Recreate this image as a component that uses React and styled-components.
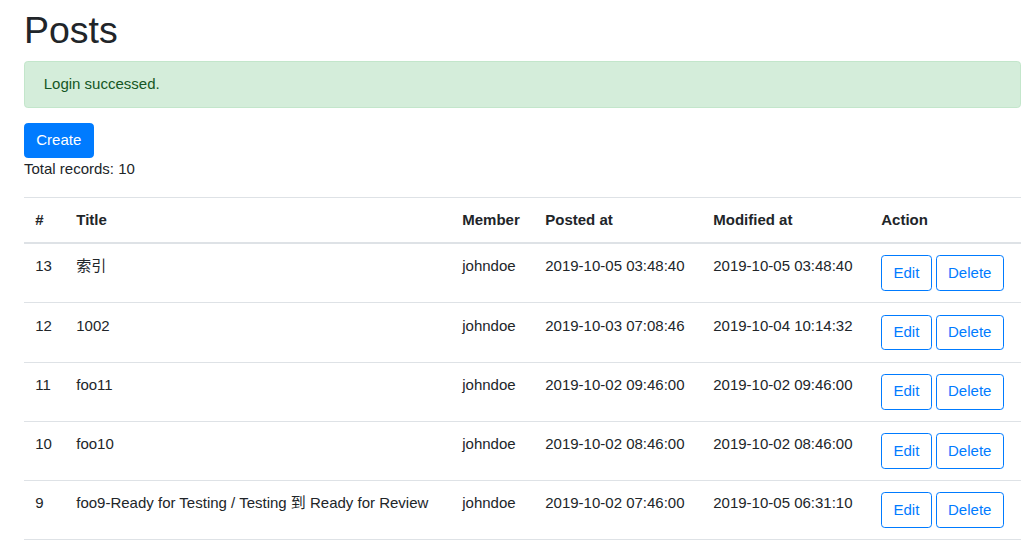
import styled, { createGlobalStyle } from "styled-components";

const GlobalStyle = createGlobalStyle`
  html, body {
    margin: 0;
    padding: 0;
    background: #fff;
  }
  body {
    font-family: "Liberation Sans", Arial, "Noto Sans CJK SC", sans-serif;
    font-size: 15px;
    line-height: 1.5;
    color: #212529;
  }
  *, *::before, *::after {
    box-sizing: border-box;
  }
`;

const posts = [
  { id: 13, title: "索引", member: "johndoe", posted: "2019-10-05 03:48:40", modified: "2019-10-05 03:48:40" },
  { id: 12, title: "1002", member: "johndoe", posted: "2019-10-03 07:08:46", modified: "2019-10-04 10:14:32" },
  { id: 11, title: "foo11", member: "johndoe", posted: "2019-10-02 09:46:00", modified: "2019-10-02 09:46:00" },
  { id: 10, title: "foo10", member: "johndoe", posted: "2019-10-02 08:46:00", modified: "2019-10-02 08:46:00" },
  { id: 9, title: "foo9-Ready for Testing / Testing 到 Ready for Review", member: "johndoe", posted: "2019-10-02 07:46:00", modified: "2019-10-05 06:31:10" },
];

const columns = [
  { label: "#", width: 41 },
  { label: "Title", width: 386 },
  { label: "Member", width: 83 },
  { label: "Posted at", width: 168 },
  { label: "Modified at", width: 168 },
  { label: "Action", width: 151 },
];

export default function App() {
  return (
    <>
      <GlobalStyle />
      <Page>
        <Heading>Posts</Heading>
        <Alert>Login successed.</Alert>
        <PrimaryButton>Create</PrimaryButton>
        <Total>Total records: 10</Total>
        <Table>
          <colgroup>
            {columns.map((c) => (
              <col key={c.label} style={{ width: c.width }} />
            ))}
          </colgroup>
          <thead>
            <tr>
              {columns.map((c) => (
                <Th key={c.label}>{c.label}</Th>
              ))}
            </tr>
          </thead>
          <tbody>
            {posts.map((p) => (
              <tr key={p.id}>
                <Td>{p.id}</Td>
                <Td>{p.title}</Td>
                <Td>{p.member}</Td>
                <Td>{p.posted}</Td>
                <Td>{p.modified}</Td>
                <Td>
                  <OutlineButton>Edit</OutlineButton>{" "}
                  <OutlineButton>Delete</OutlineButton>
                </Td>
              </tr>
            ))}
          </tbody>
        </Table>
      </Page>
    </>
  );
}

const Page = styled.div`
  padding: 8px 3px 0 24px;
`;

const Heading = styled.h1`
  margin: 0 0 7.5px;
  font-size: 37.5px;
  font-weight: 500;
  line-height: 1.2;
`;

const Alert = styled.div`
  padding: 11.25px 18.75px;
  margin-bottom: 15px;
  border: 1px solid #c3e6cb;
  border-radius: 3.75px;
  background-color: #d4edda;
  color: #155724;
`;

const PrimaryButton = styled.button`
  display: inline-block;
  font-family: inherit;
  font-size: 15px;
  line-height: 1.5;
  padding: 5.6px 11.25px;
  border: 1px solid #007bff;
  border-radius: 3.75px;
  background-color: #007bff;
  color: #fff;
  cursor: pointer;
`;

const Total = styled.p`
  margin: 0 0 16px;
`;

const Table = styled.table`
  width: 100%;
  border-collapse: collapse;
  table-layout: fixed;
  color: #212529;
`;

const Th = styled.th`
  padding: 11px 11.25px;
  text-align: left;
  font-weight: 700;
  vertical-align: bottom;
  border-top: 1px solid #dee2e6;
  border-bottom: 2px solid #dee2e6;
`;

const Td = styled.td`
  padding: 11.25px;
  vertical-align: top;
  border-top: 1px solid #dee2e6;
  border-bottom: 1px solid #dee2e6;
`;

const OutlineButton = styled.button`
  display: inline-block;
  font-family: inherit;
  font-size: 15px;
  line-height: 1.5;
  padding: 5.6px 11.25px;
  border: 1px solid #007bff;
  border-radius: 3.75px;
  background-color: transparent;
  color: #007bff;
  cursor: pointer;
`;
